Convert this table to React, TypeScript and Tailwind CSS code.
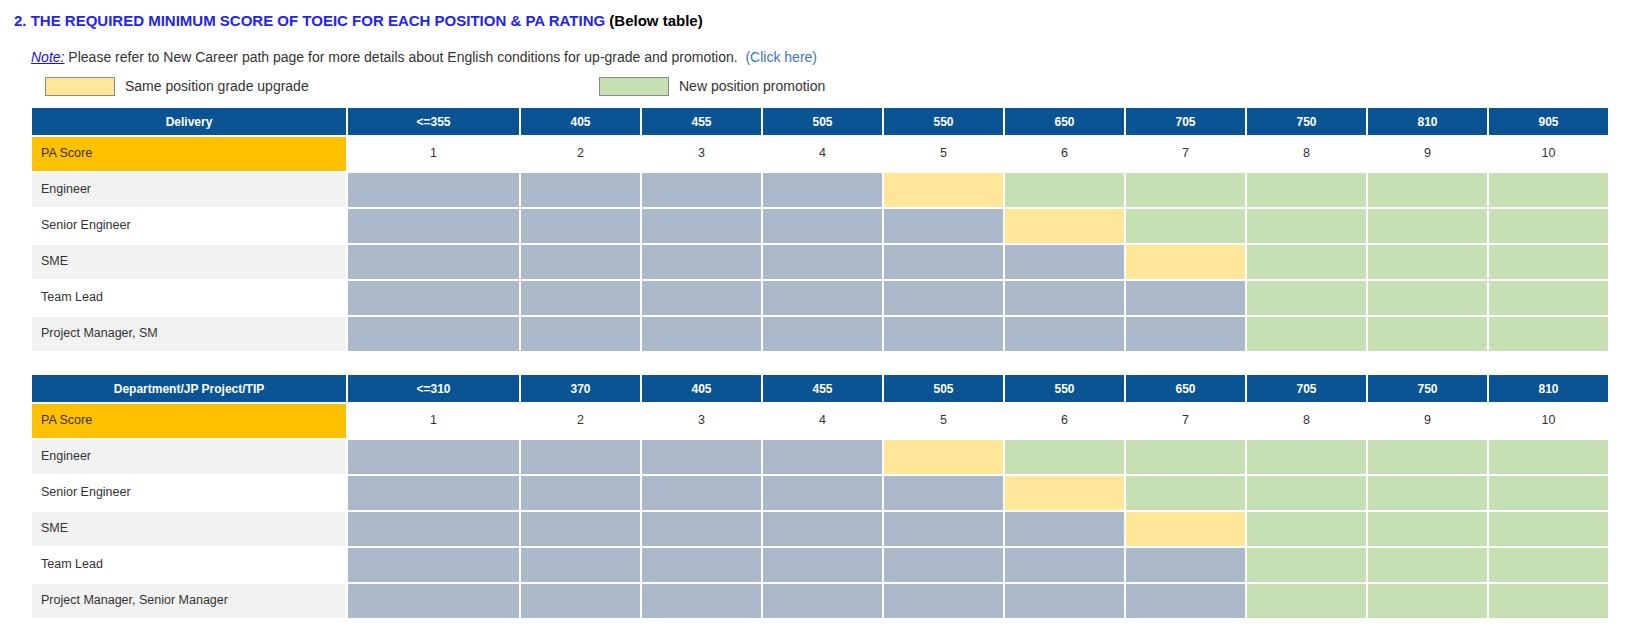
const font = { fontFamily: '"Liberation Sans", Arial, sans-serif' };

type Cell = "gray" | "yellow" | "green";

const rowPlan: Array<{ yellow: number | null; greenFrom: number }> = [
  { yellow: 4, greenFrom: 5 },
  { yellow: 5, greenFrom: 6 },
  { yellow: 6, greenFrom: 7 },
  { yellow: null, greenFrom: 7 },
  { yellow: null, greenFrom: 7 },
];

const cellClass: Record<Cell, string> = {
  gray: "bg-[#acb9ca]",
  yellow: "bg-[#ffe699]",
  green: "bg-[#c6e0b4]",
};

const cellKind = (row: number, col: number): Cell => {
  const plan = rowPlan[row];
  if (plan.yellow === col) return "yellow";
  if (col >= plan.greenFrom) return "green";
  return "gray";
};

interface ScoreTableProps {
  title: string;
  scores: string[];
  positions: string[];
}

const ScoreTable = ({ title, scores, positions }: ScoreTableProps) => {
  return (
    <div className="ml-[32px] w-[1576px] grid grid-cols-[314px_171px_repeat(9,minmax(0,1fr))] gap-[2px] text-[12.5px] text-[#333333]">
      <div className="h-[27px] bg-[#0a5494] text-white text-[12px] font-bold flex items-center justify-center">
        {title}
      </div>
      {scores.map((s) => (
        <div key={s} className="h-[27px] bg-[#0a5494] text-white text-[12px] font-bold flex items-center justify-center">
          {s}
        </div>
      ))}

      <div className="h-[34px] bg-[#ffc000] flex items-center pl-[9px] pb-[2px]">PA Score</div>
      {scores.map((_, i) => (
        <div key={i} className="h-[34px] bg-white flex items-center justify-center pb-[2px]">
          {i + 1}
        </div>
      ))}

      {positions.map((p, r) => (
        <div key={p} className="contents">
          <div className={`h-[34px] flex items-center pl-[9px] pb-[2px] ${r % 2 === 0 ? "bg-[#f2f2f2]" : "bg-white"}`}>
            {p}
          </div>
          {scores.map((_, c) => (
            <div key={c} className={`h-[34px] ${cellClass[cellKind(r, c)]}`} />
          ))}
        </div>
      ))}
    </div>
  );
};

const App = () => {
  return (
    <div className="w-[1639px] h-[637px] bg-white overflow-hidden" style={font}>
      <div className="pt-[11px] pl-[14px] h-[31px] text-[15px] leading-[20px] font-bold whitespace-nowrap">
        <span className="text-[#2323f0]">2. THE REQUIRED MINIMUM SCORE OF TOEIC FOR EACH POSITION &amp; PA RATING</span>{" "}
        <span className="text-black">(Below table)</span>
      </div>

      <div className="mt-[17px] pl-[31px] h-[18px] text-[14px] leading-[18px] text-[#333333] whitespace-nowrap">
        <span className="italic underline text-[#1a0dee]">Note:</span> Please refer to New Career path page for more
        details about English conditions for up-grade and promotion.{" "}
        <span className="text-[#3a78b8]">&nbsp;(Click here)</span>
      </div>

      <div className="mt-[11px] pl-[45px] h-[18px] flex items-center text-[14px] text-[#333333]">
        <div className="w-[554px] flex items-center gap-[10px]">
          <div className="w-[70px] h-[19px] border border-[#8a8a8a] bg-[#ffe699]" />
          <span>Same position grade upgrade</span>
        </div>
        <div className="flex items-center gap-[10px]">
          <div className="w-[70px] h-[19px] border border-[#8a8a8a] bg-[#c6e0b4]" />
          <span>New position promotion</span>
        </div>
      </div>

      <div className="mt-[13px]">
        <ScoreTable
          title="Delivery"
          scores={["<=355", "405", "455", "505", "550", "650", "705", "750", "810", "905"]}
          positions={["Engineer", "Senior Engineer", "SME", "Team Lead", "Project Manager, SM"]}
        />
      </div>

      <div className="mt-[24px]">
        <ScoreTable
          title="Department/JP Project/TIP"
          scores={["<=310", "370", "405", "455", "505", "550", "650", "705", "750", "810"]}
          positions={["Engineer", "Senior Engineer", "SME", "Team Lead", "Project Manager, Senior Manager"]}
        />
      </div>
    </div>
  );
};

export default App;
